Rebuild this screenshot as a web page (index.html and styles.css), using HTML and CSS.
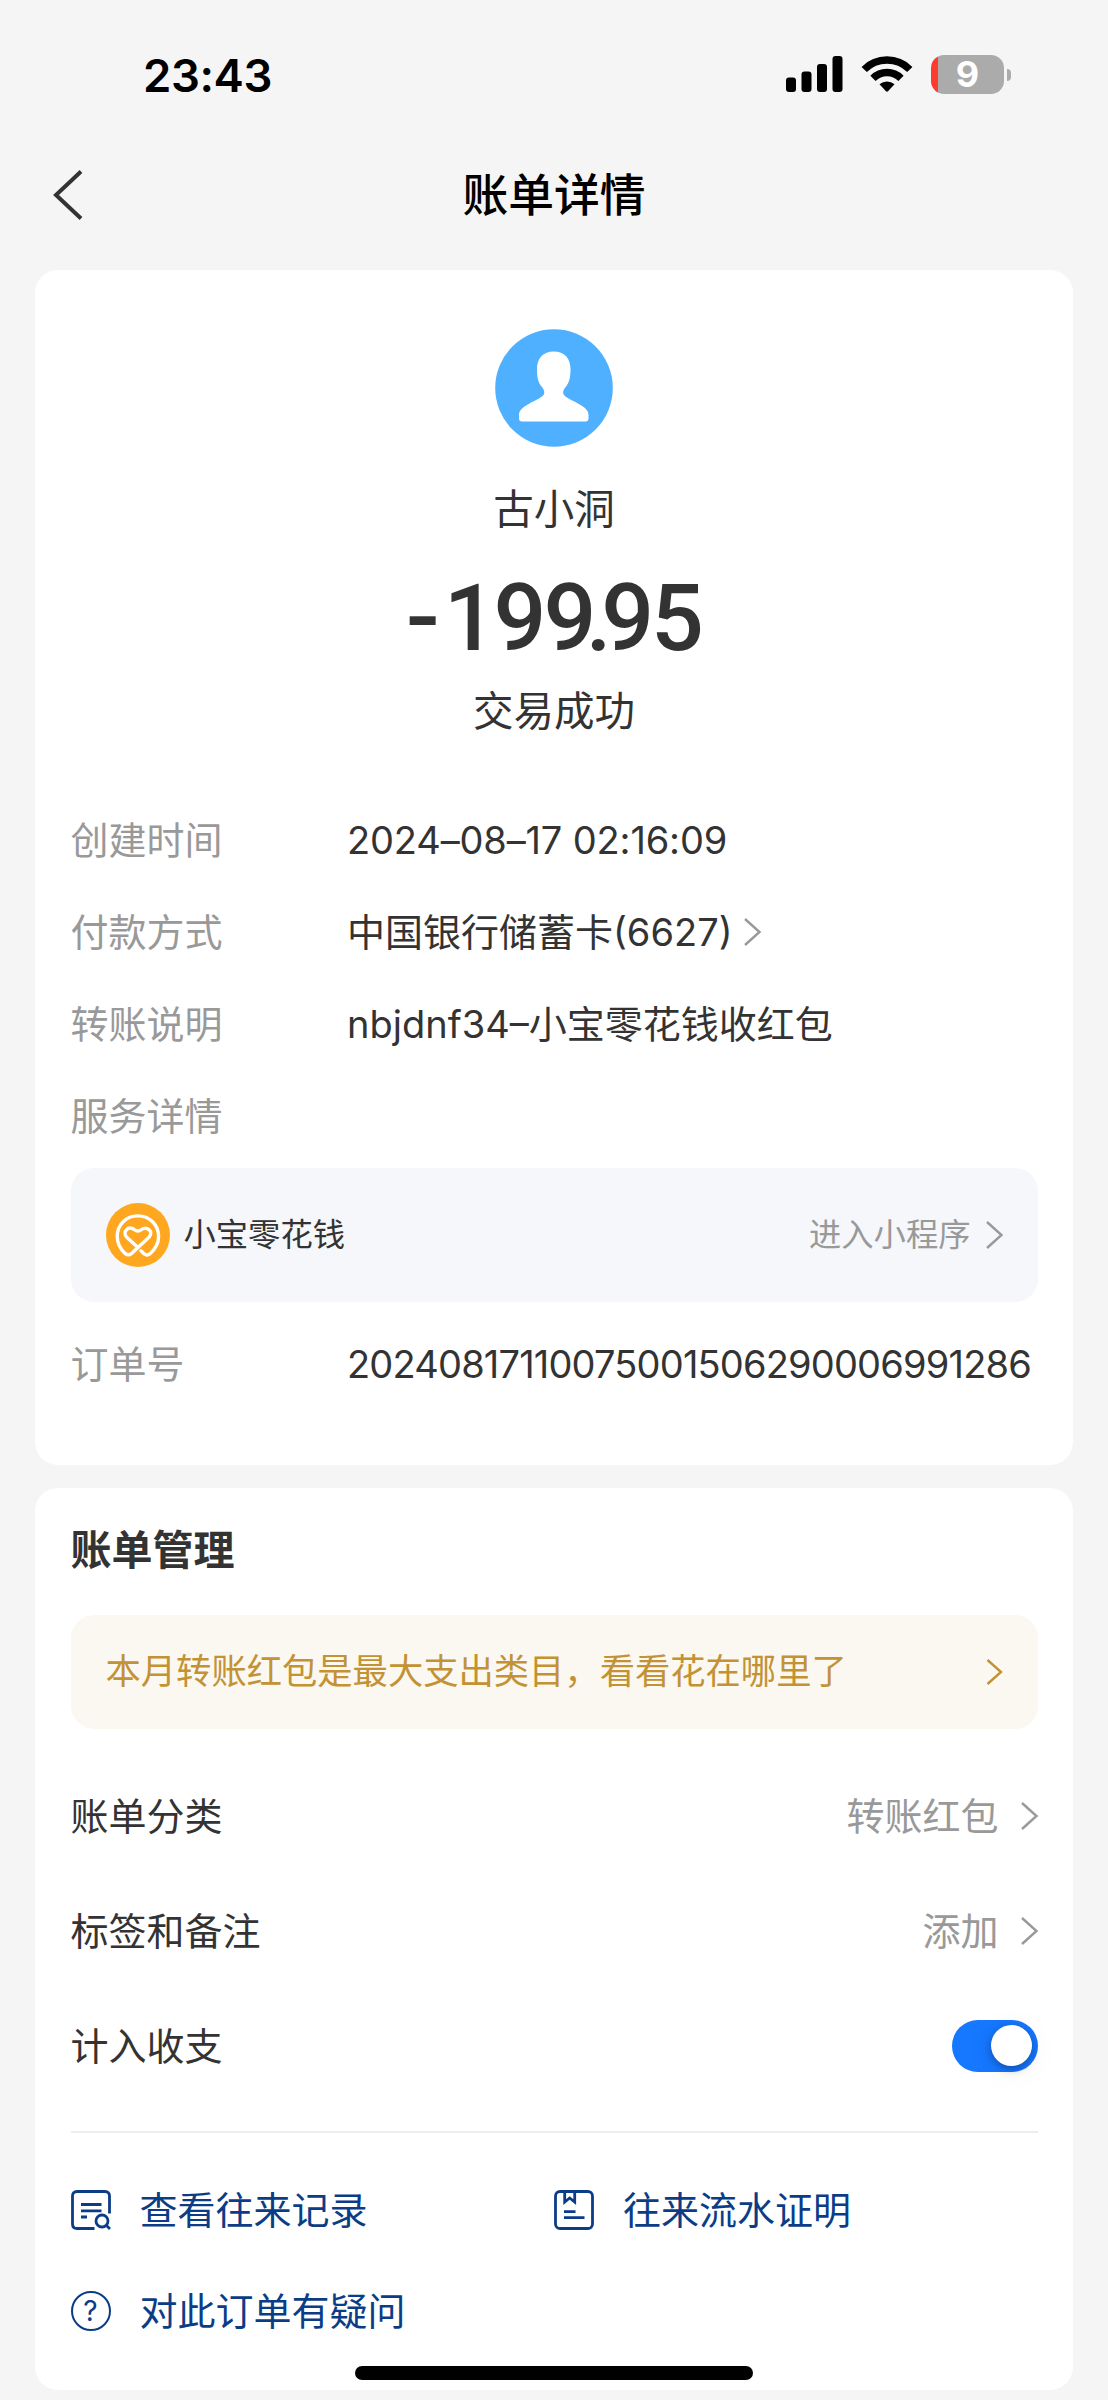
FILE: index.html
```html
<!DOCTYPE html>
<html lang="zh-CN">
<head>
<meta charset="utf-8">
<title>账单详情</title>
<link rel="stylesheet" href="styles.css">
</head>
<body>
<div class="page">
  <div class="statusbar">
    <span class="time">23:43</span>
    <div class="indicators">
      <svg class="signal" width="47" height="36" viewBox="0 0 47 36"><rect x="0" y="21.5" width="10" height="14.5" rx="3"/><rect x="15.5" y="15.5" width="10" height="20.5" rx="3"/><rect x="31" y="8" width="10" height="28" rx="3"/><rect x="46.500" y="0" width="10" height="36" rx="3"/></svg>
      <svg class="wifi" width="50" height="37" viewBox="0 0 50 37"><g fill="none" stroke="#000" stroke-width="7.4"><path d="M2.200 13.500A32.200 32.200 0 0 1 47.800 13.500"/><path d="M11 22.300A19.800 19.800 0 0 1 39 22.300"/></g><path d="M17.500 28.200A11.500 11.500 0 0 1 32.500 28.200L26 35.300Q25 36.200 24 35.300Z"/></svg>
      <div class="battery">9</div>
      <span class="nub"></span>
    </div>
  </div>

  <header class="navbar">
    <svg class="back" width="32" height="50" viewBox="0 0 32 50"><path d="M29 1.500L4 25L29 48.500"/></svg>
    <h1>账单详情</h1>
  </header>

  <section class="card detail">
    <div class="summary">
      <svg class="avatar" viewBox="0 0 118 118"><circle cx="59" cy="59" r="58.800" fill="#4fb0ff"/><path fill="#fff" d="M58.700 22.500C48 22.500 42 29.500 42 40C42 49 43.300 53.500 46.500 57.500C49.500 61 50 64 48.500 66C45 70 39 71.500 32 76C26 79.500 24 82.500 24 86V89.500Q24 92.500 27 92.500H90.500Q93.500 92.500 93.500 89.500V86C93.500 82.500 91.500 79.500 85.500 76C78.500 71.500 72.500 70 69 66C67.500 64 68 61 71 57.500C74.200 53.500 75.500 49 75.500 40C75.500 29.500 69.500 22.500 58.700 22.500Z"/></svg>
      <p class="name">古小洞</p>
      <p class="amount"><span class="minus">-</span>19<span class="tight">9.</span>95</p>
      <p class="result">交易成功</p>
    </div>
    <dl class="fields">
      <div class="field"><dt>创建时间</dt><dd class="date">2024–08–17 02:16:09</dd></div>
      <div class="field"><dt>付款方式</dt><dd>中国银行储蓄卡(6627)<svg class="chevron inline" viewBox="0 0 17 28"><path d="M1 1L15.500 14L1 27"/></svg></dd></div>
      <div class="field"><dt>转账说明</dt><dd>nbjdnf34–小宝零花钱收红包</dd></div>
      <div class="field"><dt>服务详情</dt></div>
    </dl>
    <div class="service">
      <svg class="logo" viewBox="0 0 64 64"><circle cx="32" cy="32" r="32" fill="#ffa71e"/><path fill="none" stroke="#fff" stroke-width="3.400" stroke-linecap="round" stroke-linejoin="round" d="M35 47.800L38 50.700Q41 53.300 44 50.700C49.300 46 52.600 40 52.600 33.500C52.600 21.500 43.300 12.900 31.800 12.900C20.300 12.900 11.200 21.500 11.200 33.500C11.200 40 14.200 45.800 19.300 50.700Q22.300 53 25.300 50.700L42.700 34.500C45.200 32 45.500 28.600 43.200 26.800C40.500 24.600 37.500 25 35.500 26.500Q31.800 29.500 28.200 26.500C25.500 24.600 22.500 24.600 20.500 26.800C18.200 29.200 18.700 32.200 21 34.500L30.300 43"/></svg>
      <span>小宝零花钱</span>
      <span class="enter">进入小程序</span>
      <svg class="chevron" viewBox="0 0 17 28"><path d="M1 1L15.500 14L1 27"/></svg>
    </div>
    <dl class="fields order">
      <div class="field"><dt>订单号</dt><dd class="number">20240817110075001506290006991286</dd></div>
    </dl>
  </section>

  <section class="card manage">
    <h2>账单管理</h2>
    <div class="banner">
      <span>本月转账红包是最大支出类目，看看花在哪里了</span>
      <svg class="chevron gold" viewBox="0 0 17 28"><path d="M1.500 2L15 14L1.500 26"/></svg>
    </div>
    <div class="options">
      <div class="option"><span>账单分类</span><span class="value">转账红包</span><svg class="chevron" viewBox="0 0 17 28"><path d="M1 1L15.500 14L1 27"/></svg></div>
      <div class="option"><span>标签和备注</span><span class="value">添加</span><svg class="chevron" viewBox="0 0 17 28"><path d="M1 1L15.500 14L1 27"/></svg></div>
      <div class="option"><span>计入收支</span><span class="toggle"><span class="knob"></span></span></div>
    </div>
    <div class="links">
      <a class="link"><svg viewBox="0 0 40 40"><path d="M38.500 23.500V6Q38.500 1.500 34 1.500H6Q1.500 1.500 1.500 6V34Q1.500 38.500 6 38.500H23.500M10 14.500H30.500M10 20.800H30.500M10 27H16M35.500 35.500L39 39"/><circle cx="31" cy="31" r="6"/></svg>查看往来记录</a>
      <a class="link"><svg viewBox="0 0 40 40"><rect x="1.500" y="1.500" width="37" height="37" rx="4.500"/><path d="M10.700 1.500V12L15.700 8L20.700 12V1.500M10 21.700H21.500M10 27.700H30.500"/></svg>往来流水证明</a>
      <a class="link"><span class="help">?</span>对此订单有疑问</a>
    </div>
  </section>
  <div class="home-indicator"></div>
</div>
</body>
</html>
```
FILE: styles.css
```css
* { box-sizing: border-box; }

body {
  margin: 0;
  background: #f5f5f5;
  color: #333;
  font: 38px/46px Inter, "Noto Sans CJK SC", sans-serif;
}

h1, h2, p, dl, dd { margin: 0; }
svg { flex: none; overflow: visible; }

.page {
  position: relative;
  width: 1108px;
  height: 2400px;
  padding: 0 35px;
  overflow: hidden;
}

.statusbar {
  display: flex;
  justify-content: space-between;
  height: 150px;
  padding: 55px 62px 0 108px;
  color: #000;
}

.time {
  font-size: 45.500px;
  font-weight: 600;
  line-height: 41px;
  letter-spacing: -0.400px;
}

.indicators { display: flex; height: 39px; }
.signal { margin: 1px 29px 0 0; }
.wifi { margin: 1px 19px 0 0; }

.battery {
  width: 73px;
  height: 39px;
  border-radius: 13px;
  background: linear-gradient(90deg, #ff3b30 7px, #ababab 7px);
  color: #fff;
  font-size: 36px;
  font-weight: 700;
  line-height: 39px;
  text-align: center;
}

.nub {
  width: 4px;
  height: 12px;
  margin: 13.500px 0 0 3px;
  border-radius: 0 4px 4px 0;
  background: #ababab;
}

.navbar {
  display: grid;
  grid-template-columns: 32px 1fr 32px;
  align-items: center;
  height: 90px;
  margin-bottom: 30px;
  padding: 0 17px;
}

.back { fill: none; stroke: #333; stroke-width: 4; }

h1 {
  padding-top: 2px;
  color: #000;
  font-size: 45.800px;
  font-weight: 500;
  text-align: center;
}

.card {
  border-radius: 23px;
  background: #fff;
}

.detail {
  height: 1195px;
  margin-bottom: 23px;
  padding: 59px 35.500px 0;
}

.summary { display: flex; flex-direction: column; align-items: center; }
.avatar { width: 118px; height: 118px; }
.name, .result { font-size: 40.500px; line-height: 48px; }
.name { margin-top: 39px; }

.amount {
  margin-top: 36px;
  font-family: Roboto, sans-serif;
  font-size: 93px;
  font-weight: 500;
  line-height: 98px;
  letter-spacing: -3px;
}

.minus {
  display: inline-block;
  margin-right: 8px;
  transform: translateY(-1px) scaleX(1.080);
}

.tight { letter-spacing: -10.500px; }

.result { margin-top: 20px; }

.fields { margin-top: 58px; }

.field {
  display: flex;
  align-items: center;
  height: 92px;
  white-space: nowrap;
}

dt { flex: none; width: 276.500px; color: #999; }
dd { display: flex; align-items: center; }
.date { letter-spacing: -0.150px; }
.number { letter-spacing: -0.820px; }

.chevron {
  width: 17px;
  height: 28px;
  fill: none;
  stroke: #999;
  stroke-width: 2.400;
}

.inline { margin-left: 11px; }
.chevron.gold { stroke: #c29234; }

.service {
  display: flex;
  align-items: center;
  height: 134px;
  margin-top: 6px;
  padding: 0 35px;
  border-radius: 23px;
  background: #f5f7fb;
  font-size: 32.300px;
}

.logo { width: 64px; height: 64px; margin-right: 14px; }
.enter { margin: 0 15px 0 auto; color: #999; }
.order { margin-top: 16px; }

.manage {
  height: 902px;
  padding: 39px 35.500px 0;
}

h2 { font-size: 41px; font-weight: 700; }

.banner {
  display: flex;
  align-items: center;
  justify-content: space-between;
  height: 114px;
  margin-top: 42px;
  padding: 0 35px;
  border-radius: 23px;
  background: #fbf8f1;
  color: #c29234;
  font-size: 35.300px;
}

.options {
  height: 404px;
  padding-top: 29px;
  border-bottom: 2px solid #eee;
}

.option {
  display: flex;
  align-items: center;
  height: 115px;
}

.value { margin: 0 22px 0 auto; color: #999; }

.toggle {
  width: 86px;
  height: 52px;
  margin-left: auto;
  padding: 5.500px 6px;
  border-radius: 26px;
  background: #1677ff;
}

.knob {
  display: block;
  width: 41px;
  height: 41px;
  margin-left: auto;
  border-radius: 50%;
  background: #fff;
  box-shadow: 0 3px 8px rgba(0, 0, 0, 0.300), 0 4px 32px rgba(0, 0, 0, 0.060);
}

.links {
  display: grid;
  grid-template-columns: 483.500px 1fr;
  grid-auto-rows: 101px;
  padding-top: 26px;
  color: #0b3d87;
}

.link {
  display: flex;
  align-items: center;
  gap: 29px;
}

.link svg {
  width: 40px;
  height: 40px;
  fill: none;
  stroke: #0b3d87;
  stroke-width: 2.800;
}

.help {
  width: 40px;
  height: 40px;
  border: 2.600px solid #0b3d87;
  border-radius: 50%;
  font-size: 28px;
  line-height: 36px;
  text-align: center;
}

.home-indicator {
  position: absolute;
  left: 355px;
  top: 2366px;
  width: 398px;
  height: 14px;
  border-radius: 7px;
  background: #000;
}
```
